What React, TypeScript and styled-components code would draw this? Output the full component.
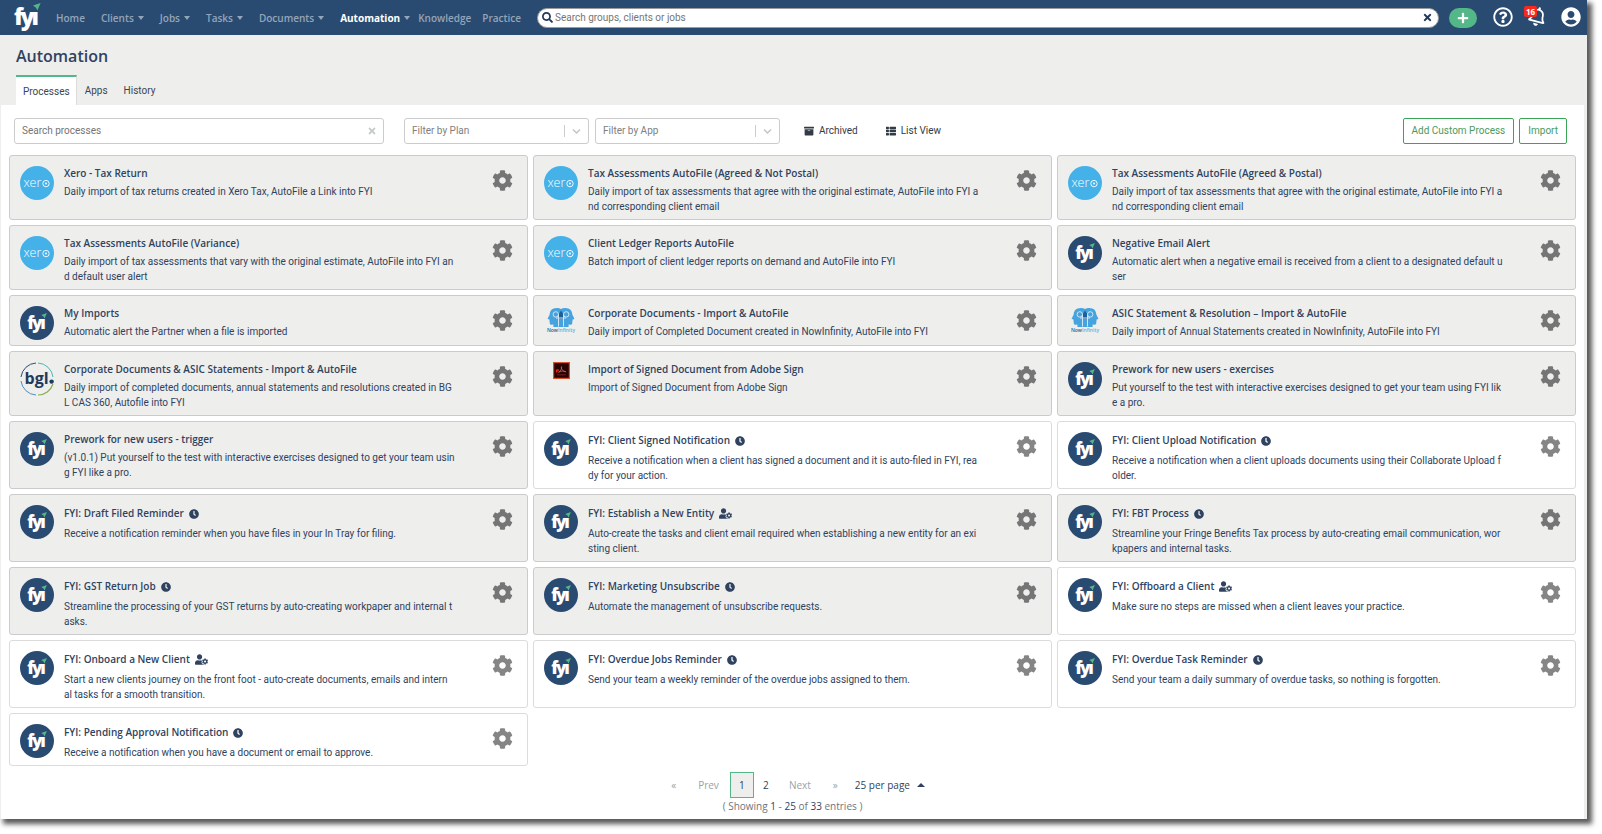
import React from 'react';
import styled, { createGlobalStyle, css } from 'styled-components';
import {
  FaArchive,
  FaClock,
  FaCog,
  FaPlus,
  FaRegBell,
  FaRegQuestionCircle,
  FaSearch,
  FaThList,
  FaTimes,
  FaUserCircle,
  FaUserCog,
} from 'react-icons/fa';

const colors = {
  navy: '#2a4b71',
  text: '#2f4360',
  muted: '#9aa2a8',
  surface: '#eeeeec',
  line: '#cccccc',
  green: '#54b788',
  action: '#3aa655',
};

const GlobalStyle = createGlobalStyle`
  *, *::before, *::after { box-sizing: border-box; }
  body {
    margin: 0;
    background: #fff;
    color: ${colors.text};
    font-family: "Open Sans", "Noto Sans", sans-serif;
    font-size: 10px;
    line-height: 14px;
  }
  button, input, select { font: inherit; color: inherit; }
  button { padding: 0; border: 0; background: none; cursor: pointer; }
  a { color: inherit; text-decoration: none; }
  svg { display: block; flex: none; overflow: visible; }
`;

const Shell = styled.div`
  display: flex;
  flex-direction: column;
  min-height: calc(100vh - 15px);
  margin: 0 15px 15px 0;
  background: ${colors.surface};
  box-shadow: 4px 4px 5px 1px rgba(0, 0, 0, 0.65);
`;

/* ---------- Top bar ---------- */

const TopBar = styled.header`
  display: flex;
  align-items: center;
  height: 35px;
  padding: 0 6px 0 14px;
  background: ${colors.navy};
`;

const Brand = styled.a`
  width: 42px;
`;

const NavGroup = styled.nav<{ $gap: number }>`
  display: flex;
  gap: ${(p) => p.$gap}px;
  margin-right: ${(p) => (p.$gap > 12 ? 8 : 16)}px;
`;

const NavLink = styled.a<{ $active?: boolean }>`
  display: flex;
  align-items: center;
  gap: 4px;
  color: ${(p) => (p.$active ? '#fff' : '#94a5b9')};
  font-weight: ${(p) => (p.$active ? 700 : 600)};
`;

const Caret = styled.span<{ $up?: boolean }>`
  border: solid transparent;
  border-width: ${(p) => (p.$up ? '0 4px 4px' : '4px 3px 0')};
  ${(p) => (p.$up ? 'border-bottom-color' : 'border-top-color')}: ${(p) => (p.$up ? colors.text : '#94a5b9')};
`;

const GlobalSearch = styled.label`
  display: flex;
  flex: 1;
  align-items: center;
  height: 20px;
  padding: 0 5px 0 4px;
  border: 1px solid #9b9b9b;
  border-radius: 10px;
  background: #fff;
  color: #23395a;
`;

const BareInput = styled.input`
  flex: 1;
  min-width: 0;
  padding: 0 2px;
  border: 0;
  outline: 0;
  background: none;
  font-family: Roboto, sans-serif;
  &::placeholder { color: #757575; opacity: 1; }
`;

const AddButton = styled.button`
  display: grid;
  place-items: center;
  width: 28px;
  height: 20px;
  margin: 0 16px 0 10px;
  border-radius: 10px;
  background: ${colors.green};
  color: #fff;
`;

const Tools = styled.div`
  display: flex;
  gap: 14px;
  padding-bottom: 2px;
  color: #fff;
`;

const ToolButton = styled.button<{ $tilt?: boolean }>`
  position: relative;
  display: grid;
  place-items: center;
  width: 20px;
  height: 22px;
  svg { transform: rotate(${(p) => (p.$tilt ? 15 : 0)}deg); }
`;

const Badge = styled.span`
  position: absolute;
  top: 0;
  left: -3px;
  padding: 0 2px;
  border-radius: 2px;
  background: #f5291d;
  font-size: 8px;
  font-weight: 700;
  line-height: 11px;
`;

/* ---------- Page heading and tabs ---------- */

const PageHead = styled.div`
  padding: 10px 16px 0;
`;

const PageTitle = styled.h1`
  margin: 0 0 8px;
  font-size: 16px;
  font-weight: 600;
  line-height: 22px;
`;

const Tabs = styled.div`
  display: flex;
`;

const Tab = styled.button<{ $active?: boolean }>`
  height: 30px;
  padding: 2px 8px 0;
  color: #3d4650;
  font-family: Roboto, sans-serif;
  ${(p) =>
    p.$active &&
    css`
      padding: 2px 6px 0 7px;
      border-top: 2px solid ${colors.green};
      border-right: 1px solid #ddd;
      background: #fff;
    `}
`;

const Panel = styled.main`
  flex: 1;
  margin: 0 3px 0 1px;
  padding: 13px 8px 5px;
  background: #fff;
`;

/* ---------- Toolbar ---------- */

const Toolbar = styled.div`
  display: flex;
  align-items: center;
  padding: 0 9px 0 5px;
  margin-bottom: 11px;
  font-family: Roboto, sans-serif;
`;

const ProcessSearch = styled.label`
  display: flex;
  align-items: center;
  flex: 0 1 370px;
  height: 26px;
  margin-right: 20px;
  padding: 0 5px;
  border: 1px solid ${colors.line};
  border-radius: 3px;
  color: #c4cac4;
`;

const ClearButton = styled.button`
  display: grid;
  place-items: center;
  width: 12px;
  height: 14px;
`;

const SelectBox = styled.div`
  display: flex;
  align-items: center;
  flex: 0 1 185px;
  height: 26px;
  margin-right: 6px;
  border: 1px solid ${colors.line};
  border-radius: 3px;
`;

const BareSelect = styled.select`
  flex: 1;
  min-width: 0;
  padding: 0 7px;
  border: 0;
  outline: 0;
  appearance: none;
  background: none;
  color: #808080;
`;

const SelectArrow = styled.span`
  padding: 0 7px;
  border-left: 1px solid ${colors.line};
`;

const ToggleButton = styled.button`
  display: flex;
  align-items: center;
  gap: 5px;
  margin-left: 18px;
  color: #333c46;
  & + & { margin-left: 28px; }
`;

const Actions = styled.div`
  display: flex;
  gap: 5px;
  margin-left: auto;
`;

const OutlineButton = styled.button`
  height: 26px;
  padding: 0 8px;
  border: 1px solid ${colors.action};
  border-radius: 2px;
  background: #fff;
  color: #4a9a5e;
`;

/* ---------- Cards ---------- */

const CardGrid = styled.ul`
  display: grid;
  grid-template-columns: repeat(3, minmax(0, 1fr));
  gap: 5px;
  margin: 0 0 6px;
  padding: 0;
  list-style: none;
`;

const Card = styled.li<{ $active?: boolean }>`
  display: flex;
  align-items: flex-start;
  padding: 10px 14px 5px 10px;
  border: 1px solid ${(p) => (p.$active ? '#dcdcdc' : '#cbcbcb')};
  border-radius: 3px;
  background: ${(p) => (p.$active ? '#fff' : colors.surface)};
`;

const LogoSlot = styled.div`
  display: flex;
  justify-content: center;
  width: 34px;
  height: 34px;
  margin-right: 10px;
`;

const CardBody = styled.div`
  flex: 1;
  min-width: 0;
`;

const CardTitle = styled.h2<{ $tall: boolean }>`
  display: flex;
  align-items: center;
  gap: 5px;
  margin: 0 0 4px;
  font-size: 10px;
  font-weight: 600;
  line-height: ${(p) => (p.$tall ? 17 : 14)}px;
`;

const CardText = styled.p`
  margin: 0;
  font-family: Roboto, sans-serif;
  line-height: 15px;
  white-space: pre-line;
`;

const GearButton = styled.button<{ $active?: boolean }>`
  margin-top: 4px;
  color: ${(p) => (p.$active ? '#858585' : '#757575')};
`;

/* ---------- Pagination ---------- */

const Pager = styled.div`
  display: flex;
  align-items: center;
  justify-content: center;
  height: 26px;
`;

const PageButton = styled.button<{ $current?: boolean; $dim?: boolean }>`
  min-width: 24px;
  height: 26px;
  padding: 0 ${(p) => (p.$dim ? 10 : 4)}px;
  border: 1px solid ${(p) => (p.$current ? colors.green : 'transparent')};
  background: ${(p) => (p.$current ? colors.surface : 'none')};
  color: ${(p) => (p.$dim ? colors.muted : colors.text)};
`;

const PageSize = styled.label`
  display: flex;
  align-items: center;
  gap: 6px;
  margin-left: 6px;
  select {
    padding: 0;
    border: 0;
    appearance: none;
    background: none;
  }
`;

const Summary = styled.p`
  margin: 1px 0 0;
  color: #6d757d;
  text-align: center;
  span { color: ${colors.text}; }
`;

/* ---------- Logos ---------- */

const FyiMark = () => (
  <>
    <text x="0 6.5 17.6" y="21.5" fill="#fff" fontFamily="Open Sans, sans-serif" fontWeight="800" fontSize="23">
      fyı
    </text>
    <path d="M19 2.6 26.6 0 23.4 7.4 22 4.8Z" fill={colors.green} />
  </>
);

const BrandLogo = () => (
  <svg width="27" height="30" viewBox="0 0 27 30" aria-label="fyi">
    <FyiMark />
  </svg>
);

const FyiLogo = () => (
  <svg width="34" height="34" viewBox="0 0 34 34">
    <circle cx="17" cy="17" r="17" fill={colors.navy} />
    <g transform="translate(7.2 7) scale(.74)">
      <FyiMark />
    </g>
  </svg>
);

const XeroLogo = () => (
  <svg width="34" height="34" viewBox="0 0 34 34">
    <circle cx="17" cy="17" r="17" fill="#44b1e8" />
    <text x="3.4" y="21" fill="#fff" fontFamily="Open Sans, sans-serif" fontWeight="300" fontSize="12.5">xer</text>
    <circle cx="26" cy="17.6" r="3.2" fill="none" stroke="#fff" strokeWidth=".9" />
    <circle cx="26" cy="17.6" r="1" fill="#fff" />
  </svg>
);

const BglLogo = () => (
  <svg width="34" height="34" viewBox="0 0 34 34" fill="none">
    <path d="M1 15A16 16 0 0 1 16 1" stroke="#2d4f78" />
    <path d="M18 1A16 16 0 0 1 33 15" stroke="#4fb5ae" />
    <path d="M33 22A16 16 0 0 1 18 33" stroke="#86ad55" strokeWidth="1.2" />
    <path d="M16 33A16 16 0 0 1 1 19" stroke="#4b8fc4" />
    <text x="4.6" y="22" fill="#1e3a5c" fontFamily="Open Sans, sans-serif" fontWeight="700" fontSize="16">bgl</text>
    <circle cx="31.6" cy="19.6" r="2.2" fill="#1e3a5c" />
  </svg>
);

const Head = () => (
  <path
    d="M14 20V16.4C14 15 17 14.4 17 11V6.4C16 2.8 13.4 1 9.8 1 5.2 1 2.8 3.8 2.7 7.4L.7 11.4C.6 12 1.1 12.2 2.4 12.4L2.8 16.4C3 17.6 4 17.8 6.4 17.6V20Z"
    fill="#46a3de"
  />
);

const NowInfinityLogo = () => (
  <svg width="34" height="34" viewBox="0 0 34 34">
    <g transform="translate(3 1)">
      <Head />
      <g transform="translate(28 0) scale(-1 1)">
        <Head />
      </g>
      <path d="M14 3.6 16.2 7V12H11.8V7Z" fill="#1d5f9a" />
      <g fill="none" stroke="#cfe6f6">
        <circle cx="8.8" cy="7.4" r="2.7" />
        <circle cx="19.2" cy="7.4" r="2.7" />
        <path d="M11.5 7.4V19.6M16.5 7.4V19.6M9 11H19" />
      </g>
    </g>
    <text x="17" y="26" textAnchor="middle" fontFamily="Open Sans, sans-serif" fontWeight="600" fontSize="5">
      <tspan fill="#2b6190">Now</tspan>
      <tspan fill="#5fb0e2">Infinity</tspan>
    </text>
  </svg>
);

const AdobeLogo = () => (
  <svg width="17" height="17" viewBox="0 0 17 17" fill="none">
    <rect x=".6" y=".6" width="15.8" height="15.8" fill="#2b0202" stroke="#d8512c" strokeWidth="1.2" />
    <path d="M3.6 7.4V10.4M5 7V9.6" stroke="#f0281c" strokeWidth="1.2" />
    <path d="M5.6 10.4C8 8.6 9 6.2 8.6 4.6 7.6 5 9 9.6 12.8 9.8 10.6 8.4 7.6 9 5.6 10.4" stroke="#b98078" strokeWidth=".7" />
    <path d="M4 12.8H12.6" stroke="#74302a" strokeWidth=".8" />
  </svg>
);

const logos = {
  fyi: FyiLogo,
  xero: XeroLogo,
  now: NowInfinityLogo,
  bgl: BglLogo,
  adobe: AdobeLogo,
};

/* ---------- Data ---------- */

type Process = {
  logo: keyof typeof logos;
  title: string;
  text: string;
  trigger?: 'clock' | 'user';
  active?: boolean;
};

const processes: Process[] = [
  { logo: 'xero', title: 'Xero - Tax Return', text: 'Daily import of tax returns created in Xero Tax, AutoFile a Link into FYI' },
  { logo: 'xero', title: 'Tax Assessments AutoFile (Agreed & Not Postal)', text: 'Daily import of tax assessments that agree with the original estimate, AutoFile into FYI a\nnd corresponding client email' },
  { logo: 'xero', title: 'Tax Assessments AutoFile (Agreed & Postal)', text: 'Daily import of tax assessments that agree with the original estimate, AutoFile into FYI a\nnd corresponding client email' },
  { logo: 'xero', title: 'Tax Assessments AutoFile (Variance)', text: 'Daily import of tax assessments that vary with the original estimate, AutoFile into FYI an\nd default user alert' },
  { logo: 'xero', title: 'Client Ledger Reports AutoFile', text: 'Batch import of client ledger reports on demand and AutoFile into FYI' },
  { logo: 'fyi', title: 'Negative Email Alert', text: 'Automatic alert when a negative email is received from a client to a designated default u\nser' },
  { logo: 'fyi', title: 'My Imports', text: 'Automatic alert the Partner when a file is imported' },
  { logo: 'now', title: 'Corporate Documents - Import & AutoFile', text: 'Daily import of Completed Document created in NowInfinity, AutoFile into FYI' },
  { logo: 'now', title: 'ASIC Statement & Resolution – Import & AutoFile', text: 'Daily import of Annual Statements created in NowInfinity, AutoFile into FYI' },
  { logo: 'bgl', title: 'Corporate Documents & ASIC Statements - Import & AutoFile', text: 'Daily import of completed documents, annual statements and resolutions created in BG\nL CAS 360, Autofile into FYI' },
  { logo: 'adobe', title: 'Import of Signed Document from Adobe Sign', text: 'Import of Signed Document from Adobe Sign' },
  { logo: 'fyi', title: 'Prework for new users - exercises', text: 'Put yourself to the test with interactive exercises designed to get your team using FYI lik\ne a pro.' },
  { logo: 'fyi', title: 'Prework for new users - trigger', text: '(v1.0.1) Put yourself to the test with interactive exercises designed to get your team usin\ng FYI like a pro.' },
  { logo: 'fyi', title: 'FYI: Client Signed Notification', trigger: 'clock', active: true, text: 'Receive a notification when a client has signed a document and it is auto-filed in FYI, rea\ndy for your action.' },
  { logo: 'fyi', title: 'FYI: Client Upload Notification', trigger: 'clock', active: true, text: 'Receive a notification when a client uploads documents using their Collaborate Upload f\nolder.' },
  { logo: 'fyi', title: 'FYI: Draft Filed Reminder', trigger: 'clock', text: 'Receive a notification reminder when you have files in your In Tray for filing.' },
  { logo: 'fyi', title: 'FYI: Establish a New Entity', trigger: 'user', text: 'Auto-create the tasks and client email required when establishing a new entity for an exi\nsting client.' },
  { logo: 'fyi', title: 'FYI: FBT Process', trigger: 'clock', text: 'Streamline your Fringe Benefits Tax process by auto-creating email communication, wor\nkpapers and internal tasks.' },
  { logo: 'fyi', title: 'FYI: GST Return Job', trigger: 'clock', text: 'Streamline the processing of your GST returns by auto-creating workpaper and internal t\nasks.' },
  { logo: 'fyi', title: 'FYI: Marketing Unsubscribe', trigger: 'clock', text: 'Automate the management of unsubscribe requests.' },
  { logo: 'fyi', title: 'FYI: Offboard a Client', trigger: 'user', active: true, text: 'Make sure no steps are missed when a client leaves your practice.' },
  { logo: 'fyi', title: 'FYI: Onboard a New Client', trigger: 'user', active: true, text: 'Start a new clients journey on the front foot - auto-create documents, emails and intern\nal tasks for a smooth transition.' },
  { logo: 'fyi', title: 'FYI: Overdue Jobs Reminder', trigger: 'clock', active: true, text: 'Send your team a weekly reminder of the overdue jobs assigned to them.' },
  { logo: 'fyi', title: 'FYI: Overdue Task Reminder', trigger: 'clock', active: true, text: 'Send your team a daily summary of overdue tasks, so nothing is forgotten.' },
  { logo: 'fyi', title: 'FYI: Pending Approval Notification', trigger: 'clock', active: true, text: 'Receive a notification when you have a document or email to approve.' },
];

const menus = ['Clients', 'Jobs', 'Tasks', 'Documents', 'Automation'];

/* ---------- Parts ---------- */

const FilterSelect = ({ label }: { label: string }) => (
  <SelectBox>
    <BareSelect aria-label={label} defaultValue="">
      <option value="">{label}</option>
    </BareSelect>
    <SelectArrow>
      <svg width="9" height="12" viewBox="0 0 9 12" fill="none" stroke="#c4c4c4" strokeWidth="1.5">
        <path d="M1 4.5 4.5 8 8 4.5" />
      </svg>
    </SelectArrow>
  </SelectBox>
);

const ProcessCard = ({ logo, title, text, trigger, active }: Process) => {
  const Logo = logos[logo];
  return (
    <Card $active={active}>
      <LogoSlot>
        <Logo />
      </LogoSlot>
      <CardBody>
        <CardTitle $tall={Boolean(trigger)}>
          {title}
          {trigger === 'clock' && <FaClock size={10} />}
          {trigger === 'user' && <FaUserCog size={13} />}
        </CardTitle>
        <CardText>{text}</CardText>
      </CardBody>
      <GearButton $active={active} aria-label={`Settings for ${title}`}>
        <FaCog size={21} />
      </GearButton>
    </Card>
  );
};

export default function App() {
  return (
    <>
      <GlobalStyle />
      <Shell>
        <TopBar>
          <Brand href="#">
            <BrandLogo />
          </Brand>
          <NavGroup $gap={16} aria-label="Main">
            <NavLink href="#">Home</NavLink>
            {menus.map((name) => (
              <NavLink key={name} href="#" $active={name === 'Automation'}>
                {name}
                <Caret />
              </NavLink>
            ))}
          </NavGroup>
          <NavGroup $gap={11} aria-label="Resources">
            <NavLink href="#">Knowledge</NavLink>
            <NavLink href="#">Practice</NavLink>
          </NavGroup>
          <GlobalSearch>
            <FaSearch size={11} />
            <BareInput aria-label="Search groups, clients or jobs" placeholder="Search groups, clients or jobs" />
            <ClearButton aria-label="Clear search">
              <FaTimes size={11} />
            </ClearButton>
          </GlobalSearch>
          <AddButton aria-label="Add">
            <FaPlus size={12} />
          </AddButton>
          <Tools>
            <ToolButton aria-label="Help">
              <FaRegQuestionCircle size={20} />
            </ToolButton>
            <ToolButton $tilt aria-label="Notifications">
              <FaRegBell size={19} />
              <Badge>16</Badge>
            </ToolButton>
            <ToolButton aria-label="Account">
              <FaUserCircle size={20} />
            </ToolButton>
          </Tools>
        </TopBar>
        <PageHead>
          <PageTitle>Automation</PageTitle>
          <Tabs role="tablist">
            <Tab role="tab" aria-selected $active>Processes</Tab>
            <Tab role="tab">Apps</Tab>
            <Tab role="tab">History</Tab>
          </Tabs>
        </PageHead>
        <Panel>
          <Toolbar>
            <ProcessSearch>
              <BareInput aria-label="Search processes" placeholder="Search processes" />
              <ClearButton aria-label="Clear process search">
                <FaTimes size={10} />
              </ClearButton>
            </ProcessSearch>
            <FilterSelect label="Filter by Plan" />
            <FilterSelect label="Filter by App" />
            <ToggleButton>
              <FaArchive size={10} />
              Archived
            </ToggleButton>
            <ToggleButton>
              <FaThList size={10} />
              List View
            </ToggleButton>
            <Actions>
              <OutlineButton>Add Custom Process</OutlineButton>
              <OutlineButton>Import</OutlineButton>
            </Actions>
          </Toolbar>
          <CardGrid>
            {processes.map((process) => (
              <ProcessCard key={process.title} {...process} />
            ))}
          </CardGrid>
          <Pager>
            <PageButton $dim aria-label="First page">«</PageButton>
            <PageButton $dim>Prev</PageButton>
            <PageButton $current>1</PageButton>
            <PageButton>2</PageButton>
            <PageButton $dim>Next</PageButton>
            <PageButton $dim aria-label="Last page">»</PageButton>
            <PageSize>
              <select aria-label="Entries per page" defaultValue="25">
                <option value="25">25 per page</option>
              </select>
              <Caret $up />
            </PageSize>
          </Pager>
          <Summary>
            ( Showing <span>1</span> - <span>25</span> of <span>33</span> entries )
          </Summary>
        </Panel>
      </Shell>
    </>
  );
}
